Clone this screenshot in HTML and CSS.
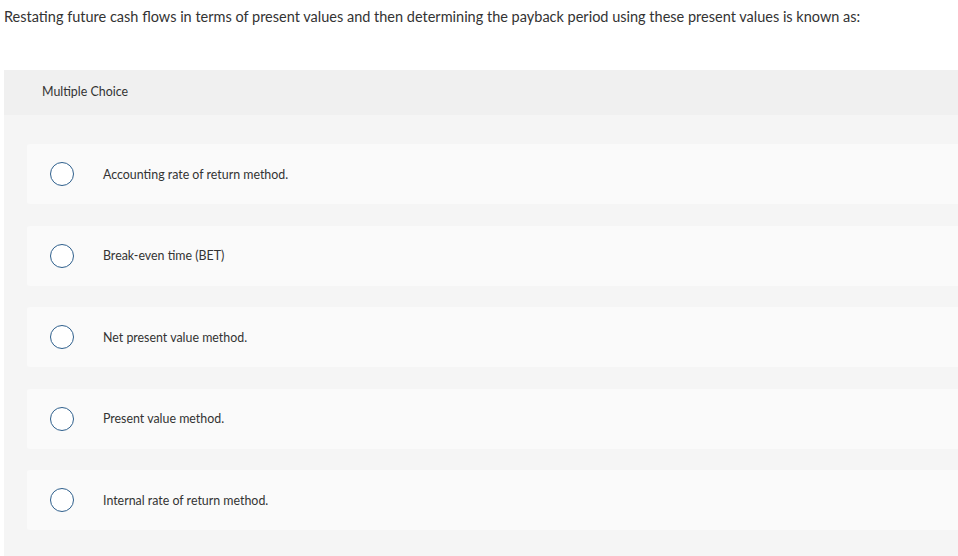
FILE: index.html
```html
<!DOCTYPE html>
<html>
<head>
<meta charset="utf-8">
<link rel="stylesheet" href="styles.css">
</head>
<body>
<p class="question">Restating future cash flows in terms of present values and then determining the payback period using these present values is known as:</p>
<div class="panel">
  <div class="panel-head">Multiple Choice</div>
  <div class="panel-body">
    <div class="option"><span class="radio"></span><span class="label">Accounting rate of return method.</span></div>
    <div class="option"><span class="radio"></span><span class="label">Break-even time (BET)</span></div>
    <div class="option"><span class="radio"></span><span class="label">Net present value method.</span></div>
    <div class="option"><span class="radio"></span><span class="label">Present value method.</span></div>
    <div class="option"><span class="radio"></span><span class="label">Internal rate of return method.</span></div>
  </div>
</div>
</body>
</html>
```

FILE: styles.css
```css
html, body {
  margin: 0;
  padding: 0;
  background: #ffffff;
  overflow: hidden;
}
body {
  font-family: Lato, "Open Sans", sans-serif;
  color: #333333;
  width: 958px;
  height: 556px;
}
.question {
  margin: 0;
  padding: 8px 0 0 4px;
  font-size: 14.5px;
  line-height: 18px;
  height: 70px;
  box-sizing: border-box;
}
.panel {
  margin-left: 4px;
  background: #f5f5f5;
}
.panel-head {
  background: #f0f0f0;
  height: 45px;
  padding-left: 38px;
  font-size: 12.4px;
  line-height: 43px;
}
.panel-body {
  padding: 29px 0 40px 23px;
  display: flex;
  flex-direction: column;
  gap: 21.5px;
}
.option {
  background: #fafafa;
  border-radius: 3px 0 0 3px;
  height: 60px;
  display: flex;
  align-items: center;
  padding-left: 23px;
}
.radio {
  width: 22px;
  height: 22px;
  border: 1.5px solid #2e5f8c;
  border-radius: 50%;
  background: #fff;
  flex: none;
}
.label {
  margin-left: 29px;
  font-size: 12.4px;
}
```
